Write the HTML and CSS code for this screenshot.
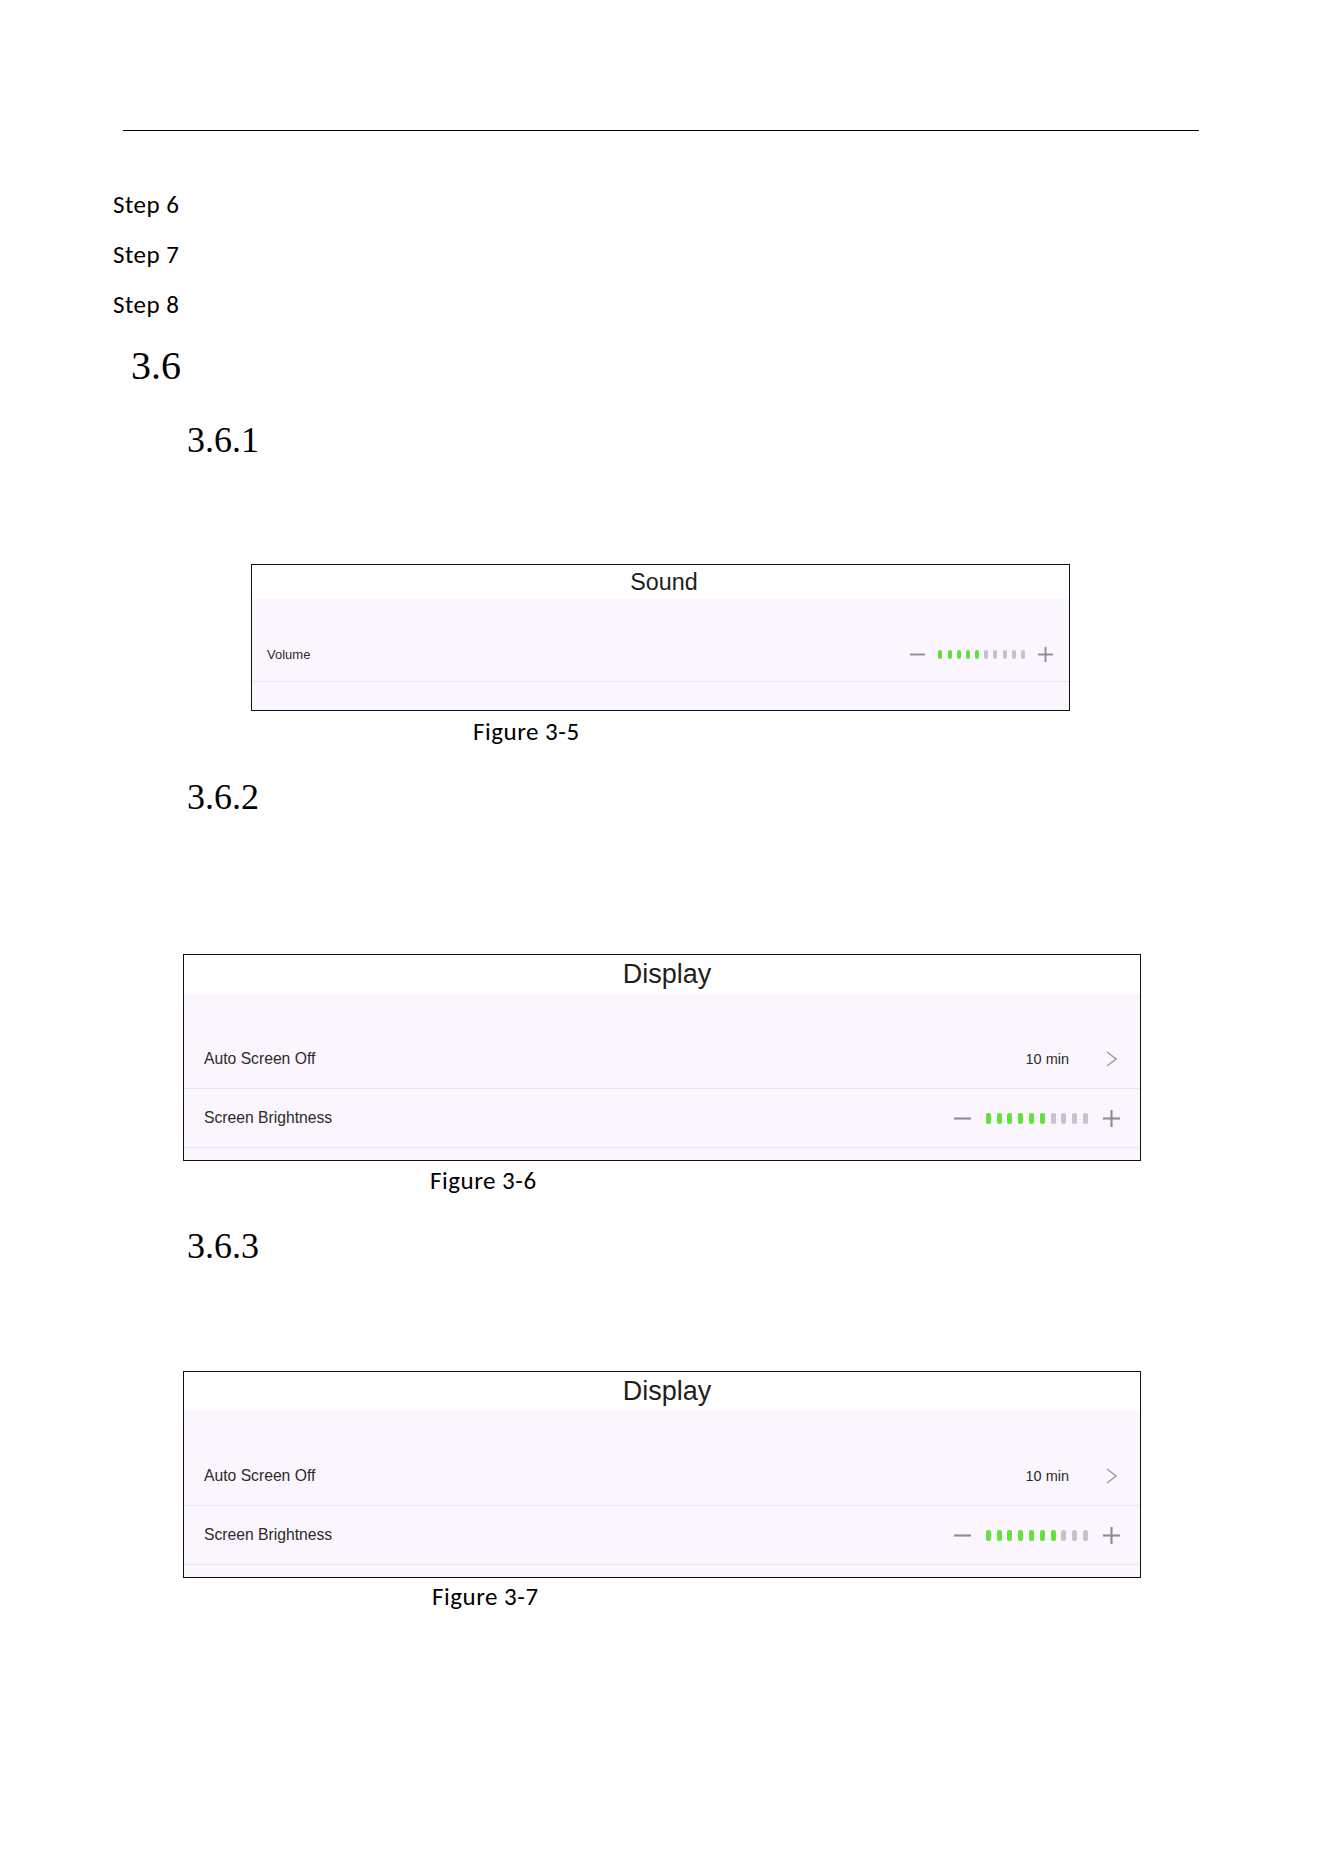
FILE: index.html
```html
<!DOCTYPE html>
<html lang="en">
<head>
    <meta charset="UTF-8" />
    <title>Sound and Display</title>
    <link rel="stylesheet" href="styles.css">
</head>
<body>
    <div class="page-rule"></div>

    <ul class="steps">
        <li>Step 6</li>
        <li>Step 7</li>
        <li>Step 8</li>
    </ul>

    <h2 class="sec">3.6</h2>

    <!--声音-->
    <h3 class="subsec">3.6.1</h3>
    <div class="shot shot-sound">
        <div class="shot-title">Sound</div>
        <div class="shot-body">
            <div class="shot-row">
                <span class="label">Volume</span>
                <div class="stepper">
                    <svg class="sign" viewBox="0 0 16 16"><line x1="0" y1="8" x2="16" y2="8"/></svg>
                    <span class="bars">
                        <i class="on"></i><i class="on"></i><i class="on"></i><i class="on"></i><i class="on"></i>
                        <i></i><i></i><i></i><i></i><i></i>
                    </span>
                    <svg class="sign" viewBox="0 0 16 16"><line x1="0" y1="8" x2="16" y2="8"/><line x1="8" y1="0" x2="8" y2="16"/></svg>
                </div>
            </div>
        </div>
    </div>
    <p class="caption cap-5">Figure 3-5</p>

    <!--显示-->
    <h3 class="subsec">3.6.2</h3>
    <div class="shot shot-display">
        <div class="shot-title">Display</div>
        <div class="shot-body">
            <div class="shot-row">
                <span class="label">Auto Screen Off</span>
                <div class="value">
                    <span>10 min</span>
                    <svg class="chevron" viewBox="0 0 11 16"><polyline points="1,1 10,8 1,15"/></svg>
                </div>
            </div>
            <div class="shot-row">
                <span class="label">Screen Brightness</span>
                <div class="stepper">
                    <svg class="sign" viewBox="0 0 16 16"><line x1="0" y1="8" x2="16" y2="8"/></svg>
                    <span class="bars">
                        <i class="on"></i><i class="on"></i><i class="on"></i><i class="on"></i><i class="on"></i><i class="on"></i>
                        <i></i><i></i><i></i><i></i>
                    </span>
                    <svg class="sign" viewBox="0 0 16 16"><line x1="0" y1="8" x2="16" y2="8"/><line x1="8" y1="0" x2="8" y2="16"/></svg>
                </div>
            </div>
        </div>
    </div>
    <p class="caption cap-6">Figure 3-6</p>

    <h3 class="subsec">3.6.3</h3>
    <div class="shot shot-display shot-last">
        <div class="shot-title">Display</div>
        <div class="shot-body">
            <div class="shot-row">
                <span class="label">Auto Screen Off</span>
                <div class="value">
                    <span>10 min</span>
                    <svg class="chevron" viewBox="0 0 11 16"><polyline points="1,1 10,8 1,15"/></svg>
                </div>
            </div>
            <div class="shot-row">
                <span class="label">Screen Brightness</span>
                <div class="stepper">
                    <svg class="sign" viewBox="0 0 16 16"><line x1="0" y1="8" x2="16" y2="8"/></svg>
                    <span class="bars">
                        <i class="on"></i><i class="on"></i><i class="on"></i><i class="on"></i><i class="on"></i><i class="on"></i><i class="on"></i>
                        <i></i><i></i><i></i>
                    </span>
                    <svg class="sign" viewBox="0 0 16 16"><line x1="0" y1="8" x2="16" y2="8"/><line x1="8" y1="0" x2="8" y2="16"/></svg>
                </div>
            </div>
        </div>
    </div>
    <p class="caption cap-7">Figure 3-7</p>
</body>
</html>
```

FILE: styles.css
```css
*{
    margin:0;
    padding:0;
    box-sizing: border-box;
}
body{
    background: #fff;
    color: #000;
    font-family: "Carlito", "Open Sans", sans-serif;
}
.page-rule{
    margin: 130px 125px 0 123px;
    border-top: 1px solid #000;
}

/* 步骤 */
.steps{
    list-style: none;
    margin: 49px 0 0 113px;
    font-size: 25px;
    letter-spacing: 0.5px;
    line-height: 50px;
}

/* 标题 */
.sec,.subsec{
    font-family: "Liberation Serif", serif;
    font-weight: normal;
}
.sec{
    margin: 12px 0 0 131px;
    font-size: 40px;
    line-height: 48px;
}
.subsec{
    margin: 28px 0 0 187px;
    font-size: 36px;
    line-height: 44px;
}

/* 截图框 */
.shot{
    border: 1px solid #111;
    font-family: "Liberation Sans", Arial, sans-serif;
    color: #2b2b2b;
}
.shot-title{
    background: #fff;
    text-align: center;
    color: #1e1e1e;
}
.shot-body{
    background: #fbf6fd;
}
.shot-row{
    display: flex;
    align-items: center;
    justify-content: space-between;
    border-bottom: 1px solid #ebe6f3;
}
.stepper{
    display: flex;
    align-items: center;
}
.sign{
    stroke: #8d8b97;
    stroke-width: 2;
    fill: none;
}
.bars{
    display: flex;
}
.bars i{
    display: block;
    border-radius: 2px;
    background: #c5c2d0;
}
.bars i.on{
    background: #62e23c;
}
.value{
    display: flex;
    align-items: center;
}
.chevron{
    width: 11px;
    height: 16px;
    margin: 0 3px 0 37px;
    stroke: #9c9aa6;
    stroke-width: 1.5;
    fill: none;
}

/* 3.6.1 音量 */
.shot-sound{
    margin: 102px 0 0 251px;
    width: 819px;
}
.shot-sound .shot-title{
    height: 34px;
    line-height: 34px;
    padding-left: 7px;
    font-size: 23.3px;
}
.shot-sound .shot-body{
    padding: 28px 0;
}
.shot-sound .shot-row{
    height: 55px;
    padding: 0 16px 0 15px;
}
.shot-sound .label{
    font-size: 13px;
}
.shot-sound .sign{
    width: 15px;
    height: 15px;
}
.shot-sound .bars{
    gap: 5.2px;
    margin: 0 13px;
}
.shot-sound .bars i{
    width: 4px;
    height: 9px;
}

/* 3.6.2 / 3.6.3 显示 */
.shot-display{
    margin: 135px 0 0 183px;
    width: 958px;
}
.shot-last{
    margin-top: 103px;
}
.shot-display .shot-title{
    height: 39px;
    line-height: 39px;
    padding-left: 10px;
    font-size: 27px;
}
.shot-display .shot-body{
    padding: 36px 0 12px;
}
.shot-display .shot-row{
    height: 59px;
    padding: 0 20px 0 20px;
}
.shot-display .label{
    font-size: 15.7px;
}
.shot-display .value span{
    font-size: 14.5px;
}
.shot-display .sign{
    width: 17px;
    height: 17px;
}
.shot-display .bars{
    gap: 5.8px;
    margin: 0 15px;
}
.shot-display .bars i{
    width: 5px;
    height: 11px;
}

/* 图注 */
.caption{
    font-size: 25px;
    letter-spacing: 0.5px;
    line-height: 30px;
}
.caption + .subsec{
    margin-top: 28px;
}
.cap-5{
    margin: 6px 0 0 473px;
}
.cap-6{
    margin: 5px 0 0 430px;
}
.cap-7{
    margin: 4px 0 0 432px;
}
```
